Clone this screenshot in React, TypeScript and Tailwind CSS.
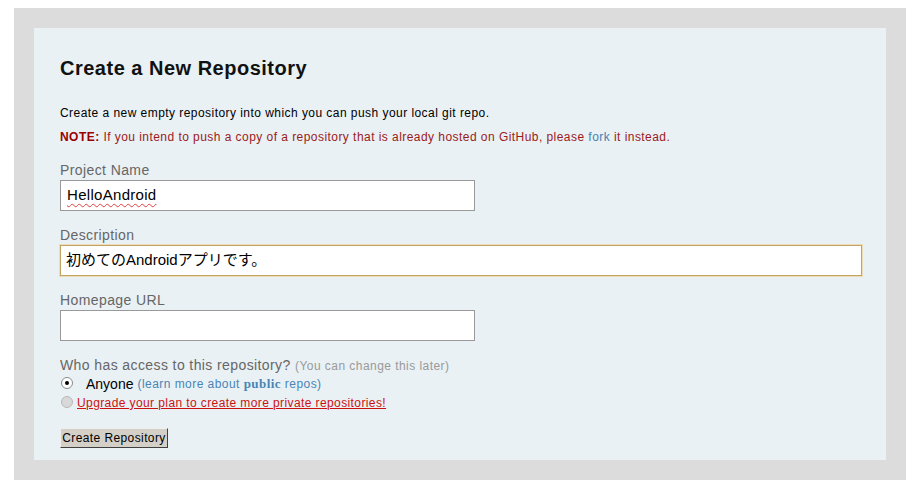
import React from 'react';

const SANS = { fontFamily: '"Liberation Sans", Arial, sans-serif' };

function Radio({ checked, disabled }: { checked?: boolean; disabled?: boolean }) {
    return (
        <span
            className={`mt-[2px] inline-flex h-[12px] w-[12px] shrink-0 items-center justify-center rounded-full border ${
                disabled ? 'border-[#b8b8b8] bg-[#d8d8d8]' : 'border-[#8a8a8a] bg-white'
            }`}
        >
            {checked && <span className="h-[4px] w-[4px] rounded-full bg-black" />}
        </span>
    );
}

function Label({ children }: { children: React.ReactNode }) {
    return <div className="text-[14px] leading-[18px] tracking-[0.4px] text-[#666]">{children}</div>;
}

export default function App() {
    return (
        <div className="min-h-[487px] bg-white pl-[14px] pt-[8px]" style={SANS}>
            <div className="h-[472px] w-[892px] bg-[#dcdcdc] p-[20px]">
                <div className="h-[432px] bg-[#e9f1f5] px-[26px] pt-[28px]">
                    <h1 className="text-[20px] font-bold leading-[24px] tracking-[0.5px] text-[#111]">Create a New Repository</h1>

                    <p className="mt-[25px] text-[12px] leading-[16px] tracking-[0.45px] text-black">
                        Create a new empty repository into which you can push your local git repo.
                    </p>
                    <p className="mt-[8px] text-[12px] leading-[16px] tracking-[0.45px] text-[#9b1b1b]">
                        <strong className="font-bold text-[#990000]">NOTE:</strong> If you intend to push a copy of a repository that is
                        already hosted on GitHub, please <a className="text-[#4a80b0]">fork</a> it instead.
                    </p>

                    <div className="mt-[16px]">
                        <Label>Project Name</Label>
                        <div className="mt-[1px] flex h-[31px] w-[415px] items-center border border-[#999] bg-white px-[6px] text-[15px] tracking-[0.3px] text-black">
                            <span className="underline decoration-[#e04040] decoration-wavy decoration-1 underline-offset-[3px]">
                                HelloAndroid
                            </span>
                        </div>
                    </div>

                    <div className="mt-[15px]">
                        <Label>Description</Label>
                        <div
                            className="mt-[1px] flex h-[31px] w-[802px] items-center border border-[#c4a262] bg-white px-[5px] text-[15px] text-black shadow-[0_0_0_1px_#ecdcb8]"
                            style={{ fontFamily: '"Liberation Sans", "Noto Sans CJK JP", sans-serif' }}
                        >
                            初めてのAndroidアプリです。
                        </div>
                    </div>

                    <div className="mt-[15px]">
                        <Label>Homepage URL</Label>
                        <div className="mt-[1px] h-[31px] w-[415px] border border-[#999] bg-white" />
                    </div>

                    <div className="mt-[15px] text-[14px] leading-[18px] tracking-[0.4px] text-[#666]">
                        Who has access to this repository?{' '}
                        <span className="text-[12px] tracking-[0.45px] text-[#999]">(You can change this later)</span>
                    </div>

                    <div className="flex items-start text-[14px] leading-[18px]">
                        <span className="ml-[1px] flex">
                            <Radio checked />
                        </span>
                        <span className="ml-[13px] text-black">Anyone</span>
                        <span className="ml-[4px] text-[12px] tracking-[0.45px] text-[#4a85b5]">
                            (learn more about{' '}
                            <b className="font-bold" style={{ fontFamily: '"Liberation Serif", Georgia, serif', fontSize: '13px' }}>
                                public
                            </b>{' '}
                            repos)
                        </span>
                    </div>

                    <div className="mt-[1px] flex items-start text-[12px] leading-[18px]">
                        <span className="ml-[1px] flex">
                            <Radio disabled />
                        </span>
                        <a className="ml-[4px] tracking-[0.4px] text-[#cc1111] underline">
                            Upgrade your plan to create more private repositories!
                        </a>
                    </div>

                    <button className="mt-[16px] h-[20px] w-[108px] border border-b-[#404040] border-l-[#f0f0f0] border-r-[#404040] border-t-[#f0f0f0] bg-[#d4d0c8] text-[12px] leading-[16px] tracking-[0.4px] text-black">
                        Create Repository
                    </button>
                </div>
            </div>
        </div>
    );
}
